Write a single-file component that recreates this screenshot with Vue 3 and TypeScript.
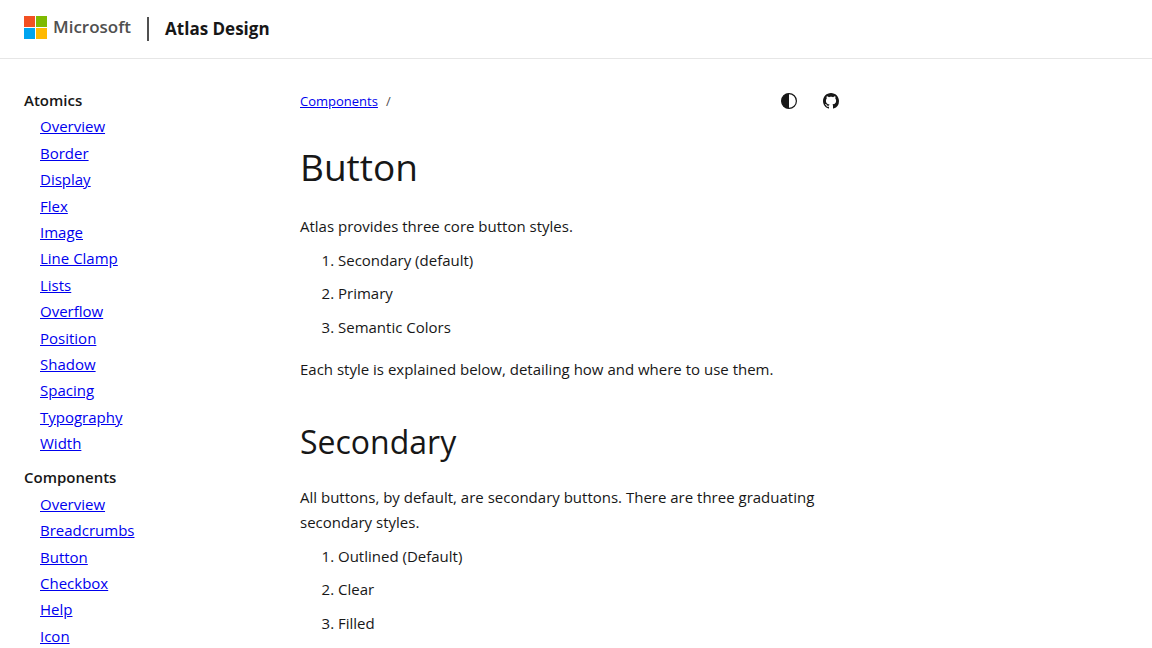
<script setup lang="ts">
interface NavGroup {
  title: string
  items: string[]
}

const groups: NavGroup[] = [
  {
    title: 'Atomics',
    items: [
      'Overview', 'Border', 'Display', 'Flex', 'Image', 'Line Clamp', 'Lists',
      'Overflow', 'Position', 'Shadow', 'Spacing', 'Typography', 'Width',
    ],
  },
  {
    title: 'Components',
    items: ['Overview', 'Breadcrumbs', 'Button', 'Checkbox', 'Help', 'Icon'],
  },
]

const coreStyles: string[] = ['Secondary (default)', 'Primary', 'Semantic Colors']
const secondaryStyles: string[] = ['Outlined (Default)', 'Clear', 'Filled']
</script>

<template>
  <div class="page">
    <header class="header">
      <a class="logo" href="#">
        <svg class="logo-mark" viewBox="0 0 23 23" aria-hidden="true">
          <path fill="#f25022" d="M0 0h11v11H0z" />
          <path fill="#7fba00" d="M12 0h11v11H12z" />
          <path fill="#00a4ef" d="M0 12h11v11H0z" />
          <path fill="#ffb900" d="M12 12h11v11H12z" />
        </svg>
        <span class="logo-name">Microsoft</span>
      </a>
      <span class="divider"></span>
      <a class="site-name" href="#">Atlas Design</a>
    </header>

    <div class="layout">
      <nav class="sidebar" aria-label="Documentation">
        <section v-for="group in groups" :key="group.title" class="group">
          <h2 class="group-title">{{ group.title }}</h2>
          <ul class="group-list">
            <li v-for="item in group.items" :key="item"><a href="#">{{ item }}</a></li>
          </ul>
        </section>
      </nav>

      <main class="content">
        <div class="toolbar">
          <nav class="breadcrumbs" aria-label="Breadcrumbs">
            <a href="#">Components</a>
            <span class="slash">/</span>
          </nav>
          <div class="actions">
            <button class="action" type="button" aria-label="Change theme">
              <svg viewBox="0 0 16 16" aria-hidden="true">
                <circle cx="8" cy="8" r="7.4" fill="none" stroke="currentColor" stroke-width="1.2" />
                <path fill="currentColor" d="M8 .6a7.4 7.4 0 0 0 0 14.8z" />
              </svg>
            </button>
            <a class="action" href="#" aria-label="View source on GitHub">
              <svg viewBox="0 0 16 16" aria-hidden="true">
                <path fill="currentColor" d="M8 0C3.58 0 0 3.58 0 8c0 3.54 2.29 6.53 5.47 7.59.4.07.55-.17.55-.38 0-.19-.01-.82-.01-1.49-2.01.37-2.53-.49-2.69-.94-.09-.23-.48-.94-.82-1.13-.28-.15-.68-.52-.01-.53.63-.01 1.08.58 1.23.82.72 1.21 1.87.87 2.33.66.07-.52.28-.87.51-1.07-1.78-.2-3.64-.89-3.64-3.95 0-.87.31-1.59.82-2.15-.08-.2-.36-1.02.08-2.12 0 0 .67-.21 2.2.82.64-.18 1.32-.27 2-.27s1.36.09 2 .27c1.53-1.04 2.2-.82 2.2-.82.44 1.1.16 1.92.08 2.12.51.56.82 1.27.82 2.15 0 3.07-1.87 3.75-3.65 3.95.29.25.54.73.54 1.48 0 1.07-.01 1.93-.01 2.2 0 .21.15.46.55.38A8.01 8.01 0 0 0 16 8c0-4.42-3.58-8-8-8z" />
              </svg>
            </a>
          </div>
        </div>

        <h1>Button</h1>
        <p>Atlas provides three core button styles.</p>
        <ol>
          <li v-for="style in coreStyles" :key="style">{{ style }}</li>
        </ol>
        <p>Each style is explained below, detailing how and where to use them.</p>

        <h2>Secondary</h2>
        <p>
          All buttons, by default, are secondary buttons. There are three graduating secondary
          styles.
        </p>
        <ol>
          <li v-for="style in secondaryStyles" :key="style">{{ style }}</li>
        </ol>
      </main>
    </div>
  </div>
</template>

<style>
body {
  margin: 0;
  background: #fff;
}

html {
  scrollbar-width: none;
}
</style>

<style scoped>
.page {
  color: #171717;
  font-family: "Segoe UI", "Open Sans", "Noto Sans", sans-serif;
  font-size: 15px;
  line-height: 1.7;
}

.header {
  display: flex;
  align-items: center;
  height: 58px;
  padding: 0 24px;
  border-bottom: 1px solid #e6e6e6;
}

.logo {
  display: flex;
  align-items: center;
  gap: 6px;
  height: 54px;
  align-self: flex-start;
  color: #505050;
  font-size: 17px;
  font-weight: 600;
  line-height: 24px;
  text-decoration: none;
}

.logo-mark {
  width: 23px;
  height: 23px;
}

.divider {
  width: 2px;
  height: 24px;
  margin: 0 16px;
  background: #505050;
}

.site-name {
  color: #171717;
  font-size: 17px;
  font-weight: 700;
  line-height: 28px;
  text-decoration: none;
}

.layout {
  display: grid;
  grid-template-columns: 252px minmax(0, 1fr);
  gap: 24px;
  padding: 28px 304px 0 24px;
}

.sidebar {
  line-height: 1.76;
}

.group {
  margin-bottom: 8px;
}

.group-title {
  margin: 0;
  font-size: 15px;
  font-weight: 600;
}

.group-list {
  margin: 0;
  padding: 0 0 0 16px;
  list-style: none;
}

a {
  color: #0000ee;
}

.toolbar {
  display: flex;
  align-items: center;
  justify-content: space-between;
  height: 28px;
}

.breadcrumbs {
  display: flex;
  gap: 8px;
  font-size: 13px;
}

.slash {
  color: #505050;
}

.actions {
  display: flex;
  gap: 8px;
}

.action {
  display: flex;
  align-items: center;
  justify-content: center;
  width: 34px;
  height: 28px;
  padding: 0;
  border: 0;
  background: none;
  color: #171717;
}

.action svg {
  width: 16px;
  height: 16px;
}

h1 {
  margin: 26px 0 21px;
  font-size: 37px;
  font-weight: 400;
  line-height: 52px;
}

.content h2 {
  margin: 35px 0 19px;
  font-size: 32px;
  font-weight: 400;
  line-height: 48px;
}

p {
  margin: 0;
}

ol {
  margin: 8px 0 17px;
  padding-left: 38px;
}

ol li + li {
  margin-top: 8px;
}
</style>
